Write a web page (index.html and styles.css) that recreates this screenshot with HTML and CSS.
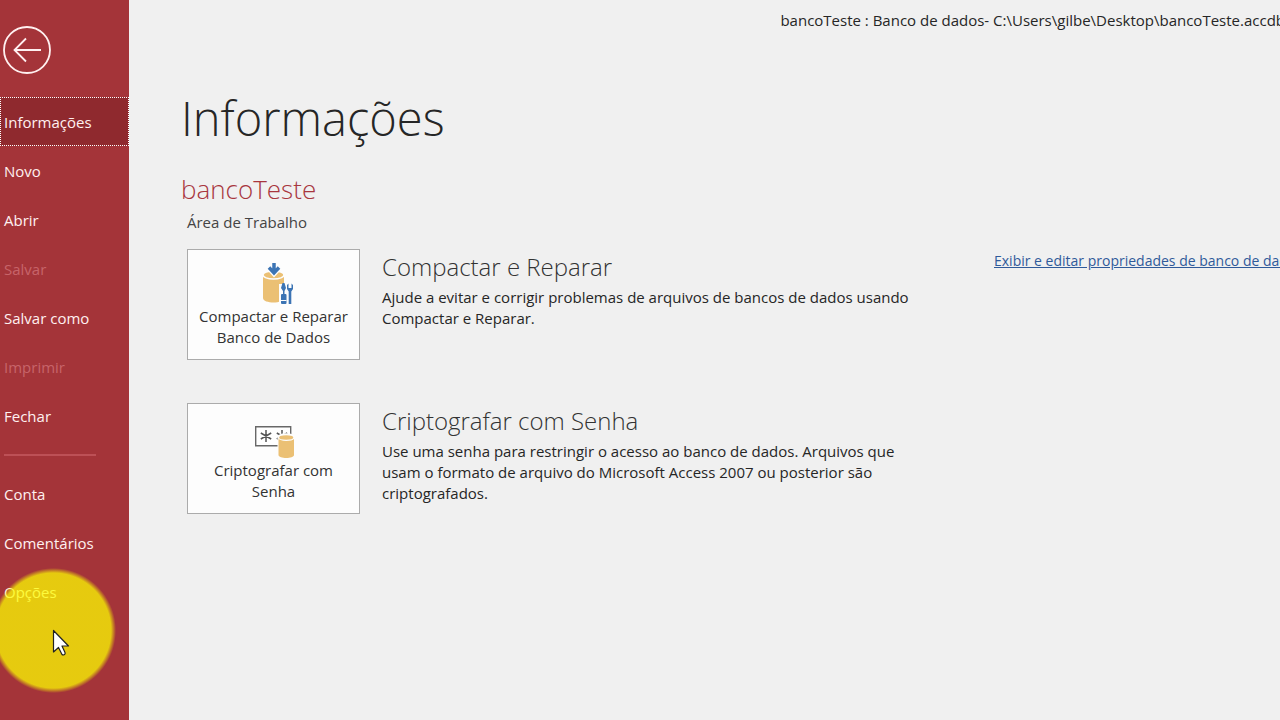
FILE: index.html
```html
<!DOCTYPE html>
<html lang="pt-BR">
<head>
<meta charset="utf-8">
<title>Informações</title>
<link rel="stylesheet" href="styles.css">
</head>
<body>
<div class="app">
  <aside class="sidebar">
    <button class="back" type="button" aria-label="Voltar">
      <svg width="48" height="48" viewBox="0 0 48 48" fill="none" stroke="#fff0f0" stroke-width="1.8"><circle cx="24" cy="24" r="23"/><path d="M38 24H12M23 12.500 11.500 24 23 35.500"/></svg>
    </button>
    <nav class="menu">
      <button class="item selected" type="button">Informações</button>
      <button class="item" type="button">Novo</button>
      <button class="item" type="button">Abrir</button>
      <button class="item" type="button" disabled>Salvar</button>
      <button class="item" type="button">Salvar como</button>
      <button class="item" type="button" disabled>Imprimir</button>
      <button class="item" type="button">Fechar</button>
      <hr class="divider">
      <button class="item" type="button">Conta</button>
      <button class="item" type="button">Comentários</button>
      <button class="item" type="button">Opções</button>
    </nav>
  </aside>
  <main class="main">
    <header class="titlebar">bancoTeste : Banco de dados- C:\Users\gilbe\Desktop\bancoTeste.accdb</header>
    <h1 class="heading">Informações</h1>
    <h2 class="database">bancoTeste</h2>
    <p class="location">Área de Trabalho</p>
    <div class="columns">
      <div class="actions">
        <section class="action">
          <button class="tile" type="button">
            <svg width="40" height="44" viewBox="0 0 40 44"><path fill="#ebc074" d="M9 14v22c0 6 21 6 21 0V14z"/><ellipse cx="19.500" cy="13" rx="10.500" ry="4" fill="#ebc074" stroke="#fdfdfd" stroke-width="1.500"/><path d="M20 0v10M14.500 5l5.500 6 5.500-6" fill="none" stroke="#fdfdfd" stroke-width="6"/><path d="M20 1v10M15 5.500l5 5.500 5-5.500" fill="none" stroke="#3c74b4" stroke-width="3.500"/><path d="M25 22h15v20H25z" fill="#fdfdfd"/><path fill="#3c74b4" d="M28.500 21h2l1.500 5-1.500 3v3h1q1 0 1 1v8q0 1-1 1h-3.500q-1 0-1-1v-8q0-1 1-1h1v-3L27 26zM33 23l1.500-1.500V26h3v-4.500L39 23v4l-1.700 2.500V42h-2.600V29.500L33 27z"/><path d="M27 38.500h5.500" stroke="#fdfdfd"/></svg>
            <span>Compactar e Reparar<br>Banco de Dados</span>
          </button>
          <div class="details">
            <h3>Compactar e Reparar</h3>
            <p>Ajude a evitar e corrigir problemas de arquivos de bancos de dados usando<br>Compactar e Reparar.</p>
          </div>
        </section>
        <section class="action">
          <button class="tile" type="button">
            <svg width="40" height="44" viewBox="0 0 40 44"><path d="M1.700 10.700h35v19h-35z" fill="#fff" stroke="#686868" stroke-width="1.400"/><path d="M12 14v12M6.800 17l10.400 6M17.200 17 6.800 23M28 14v12M22.800 17l10.400 6M33.200 17l-10.400 6" stroke="#555" stroke-width="1.500"/><path d="M23.500 21c0-5 17-5 17 0v18c0 5-17 5-17 0z" fill="#fdfdfd"/><path fill="#ebc074" d="M24.500 21v18c0 4 15.500 4 15.500 0V21z"/><ellipse cx="32.200" cy="21.500" rx="7.700" ry="2.800" fill="#ebc074" stroke="#fdfdfd" stroke-width="1.200"/></svg>
            <span>Criptografar com<br>Senha</span>
          </button>
          <div class="details">
            <h3>Criptografar com Senha</h3>
            <p>Use uma senha para restringir o acesso ao banco de dados. Arquivos que<br>usam o formato de arquivo do Microsoft Access 2007 ou posterior são<br>criptografados.</p>
          </div>
        </section>
      </div>
      <a class="properties" href="#">Exibir e editar propriedades de banco de dados</a>
    </div>
  </main>
  <div class="spotlight">
    <svg class="cursor" width="18" height="28" viewBox="0 0 18 28"><path d="M1.500 1.500v21.500l5-4.500 3.500 7q1 1 2.500 0 1-.5.500-2L10 17h6.500z" fill="#fff" stroke="#222" stroke-width="1.200" stroke-linejoin="round"/></svg>
  </div>
</div>
</body>
</html>
```
FILE: styles.css
```css
* { box-sizing: border-box; }
body {
  margin: 0;
  background: #f0f0f0;
  color: #262626;
  font: 15px/21px "Open Sans", sans-serif;
}
h1, h2, h3, p { margin: 0; font-weight: 400; }
button { font: inherit; color: inherit; border: 0; background: none; padding: 0; }
.app {
  position: relative;
  display: flex;
  min-height: 100vh;
  overflow: hidden;
}
.sidebar {
  flex: 0 0 129px;
  background: #a43439;
  color: #fff0f0;
}
.back { display: block; margin: 26px 0 23px 3px; height: 48px; }
.back svg { display: block; }
.menu { display: flex; flex-direction: column; }
.item { height: 49px; padding: 1px 0 0 4px; text-align: left; }
.item:disabled { color: #c7646a; }
.selected { background: #8f292e; outline: 1px dotted #fff; outline-offset: -1px; }
.divider { width: 92px; height: 2px; margin: 14px 4px 13px; border: 0; background: #bd5056; }
.main { flex: 1; min-width: 0; padding-left: 52px; }
.titlebar { padding: 10px 0; text-align: right; white-space: nowrap; margin-right: -5px; }
.heading { margin-top: 41px; font: 300 47px/72px "Open Sans", sans-serif; }
.database { margin-top: 17px; color: #a8363e; font: 300 26px/36px "Open Sans", sans-serif; }
.location { margin: 5px 0 16px 6px; color: #444; }
.columns { display: flex; margin-left: 6px; white-space: nowrap; }
.actions { flex: 0 0 807px; display: flex; flex-direction: column; gap: 43px; }
.action { display: flex; gap: 22px; }
.tile {
  display: flex;
  flex-direction: column;
  align-items: center;
  flex: 0 0 173px;
  height: 111px;
  padding-top: 12px;
  border: 1px solid #ababab;
  background: #fdfdfd;
  color: #333;
}
.details h3 { margin: 2px 0 4px; color: #333; font: 300 24px/32px "Open Sans", sans-serif; }
.properties { margin-top: 1px; color: #2f5a9a; height: 21px; font-size: 14px; }
.spotlight {
  position: absolute;
  left: -9px;
  top: 568px;
  width: 125px;
  height: 125px;
  background: radial-gradient(closest-side, rgb(252 253 1 / 75%) 92%, rgb(252 253 1 / 0%) 100%);
}
.cursor { position: absolute; left: 61px; top: 61px; }
```
